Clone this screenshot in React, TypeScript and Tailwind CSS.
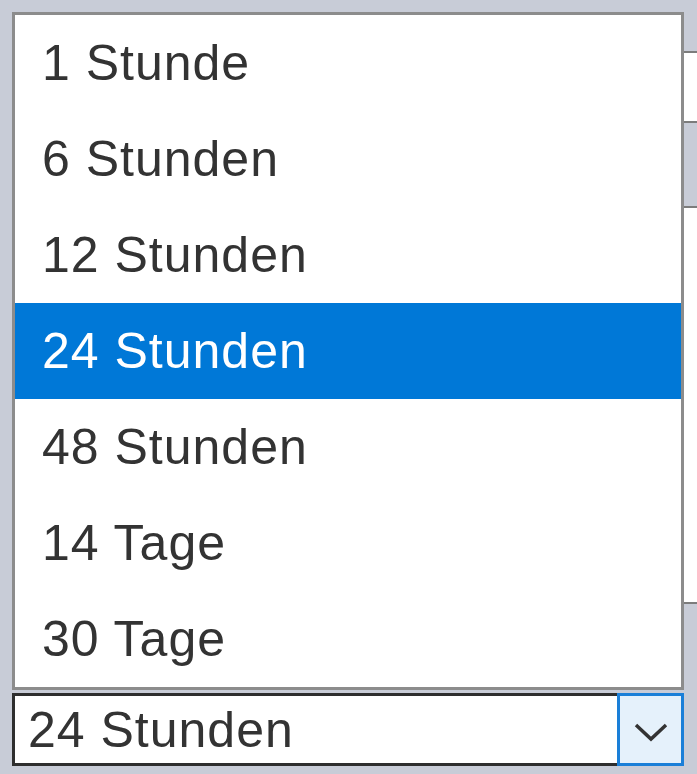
import React from "react";

const items = ["1 Stunde", "6 Stunden", "12 Stunden", "24 Stunden", "48 Stunden", "14 Tage", "30 Tage"];

export default function App() {
  return (
    <div
      className="w-[697px] h-[774px] bg-[#c8ccd7] flex overflow-hidden"
      style={{ fontFamily: '"Liberation Sans", Arial, sans-serif' }}
    >
      <div className="ml-[12px] w-[672px] pt-[12px] flex flex-col shrink-0">
        <ul className="border-[3px] border-[#8c8c8c] bg-white h-[678px] flex flex-col">
          {items.map((t) => {
            const sel = t === "24 Stunden";
            return (
              <li
                key={t}
                className={
                  sel
                    ? "h-[96px] flex items-center pl-[27px] text-[50px] leading-none tracking-[1px] bg-[#0078d7] text-white"
                    : "h-[96px] flex items-center pl-[27px] text-[50px] leading-none tracking-[1px] text-[#333333]"
                }
              >
                {t}
              </li>
            );
          })}
        </ul>
        <div className="mt-[3px] h-[73px] flex">
          <div className="flex-1 border-l-[3px] border-t-[3px] border-b-[3px] border-[#2e2e2e] bg-white flex items-center pl-[13px] text-[50px] leading-none tracking-[1px] text-[#333333]">
            24 Stunden
          </div>
          <div className="w-[67px] border-[3px] border-[#1a7fd8] bg-[#e5f1fb] flex items-center justify-center pt-[4px]">
            <svg width="36" height="20" viewBox="0 0 36 20">
              <polyline points="3,3 18,17 33,3" fill="none" stroke="#333" strokeWidth="3.5" />
            </svg>
          </div>
        </div>
      </div>
      <div className="flex-1 flex flex-col">
        <div className="h-[51px]" />
        <div className="h-[72px] bg-white border-t-2 border-b-2 border-[#7c7c7c]" />
        <div className="h-[83px]" />
        <div className="h-[398px] bg-white border-t-2 border-b-2 border-[#7c7c7c]" />
      </div>
    </div>
  );
}
